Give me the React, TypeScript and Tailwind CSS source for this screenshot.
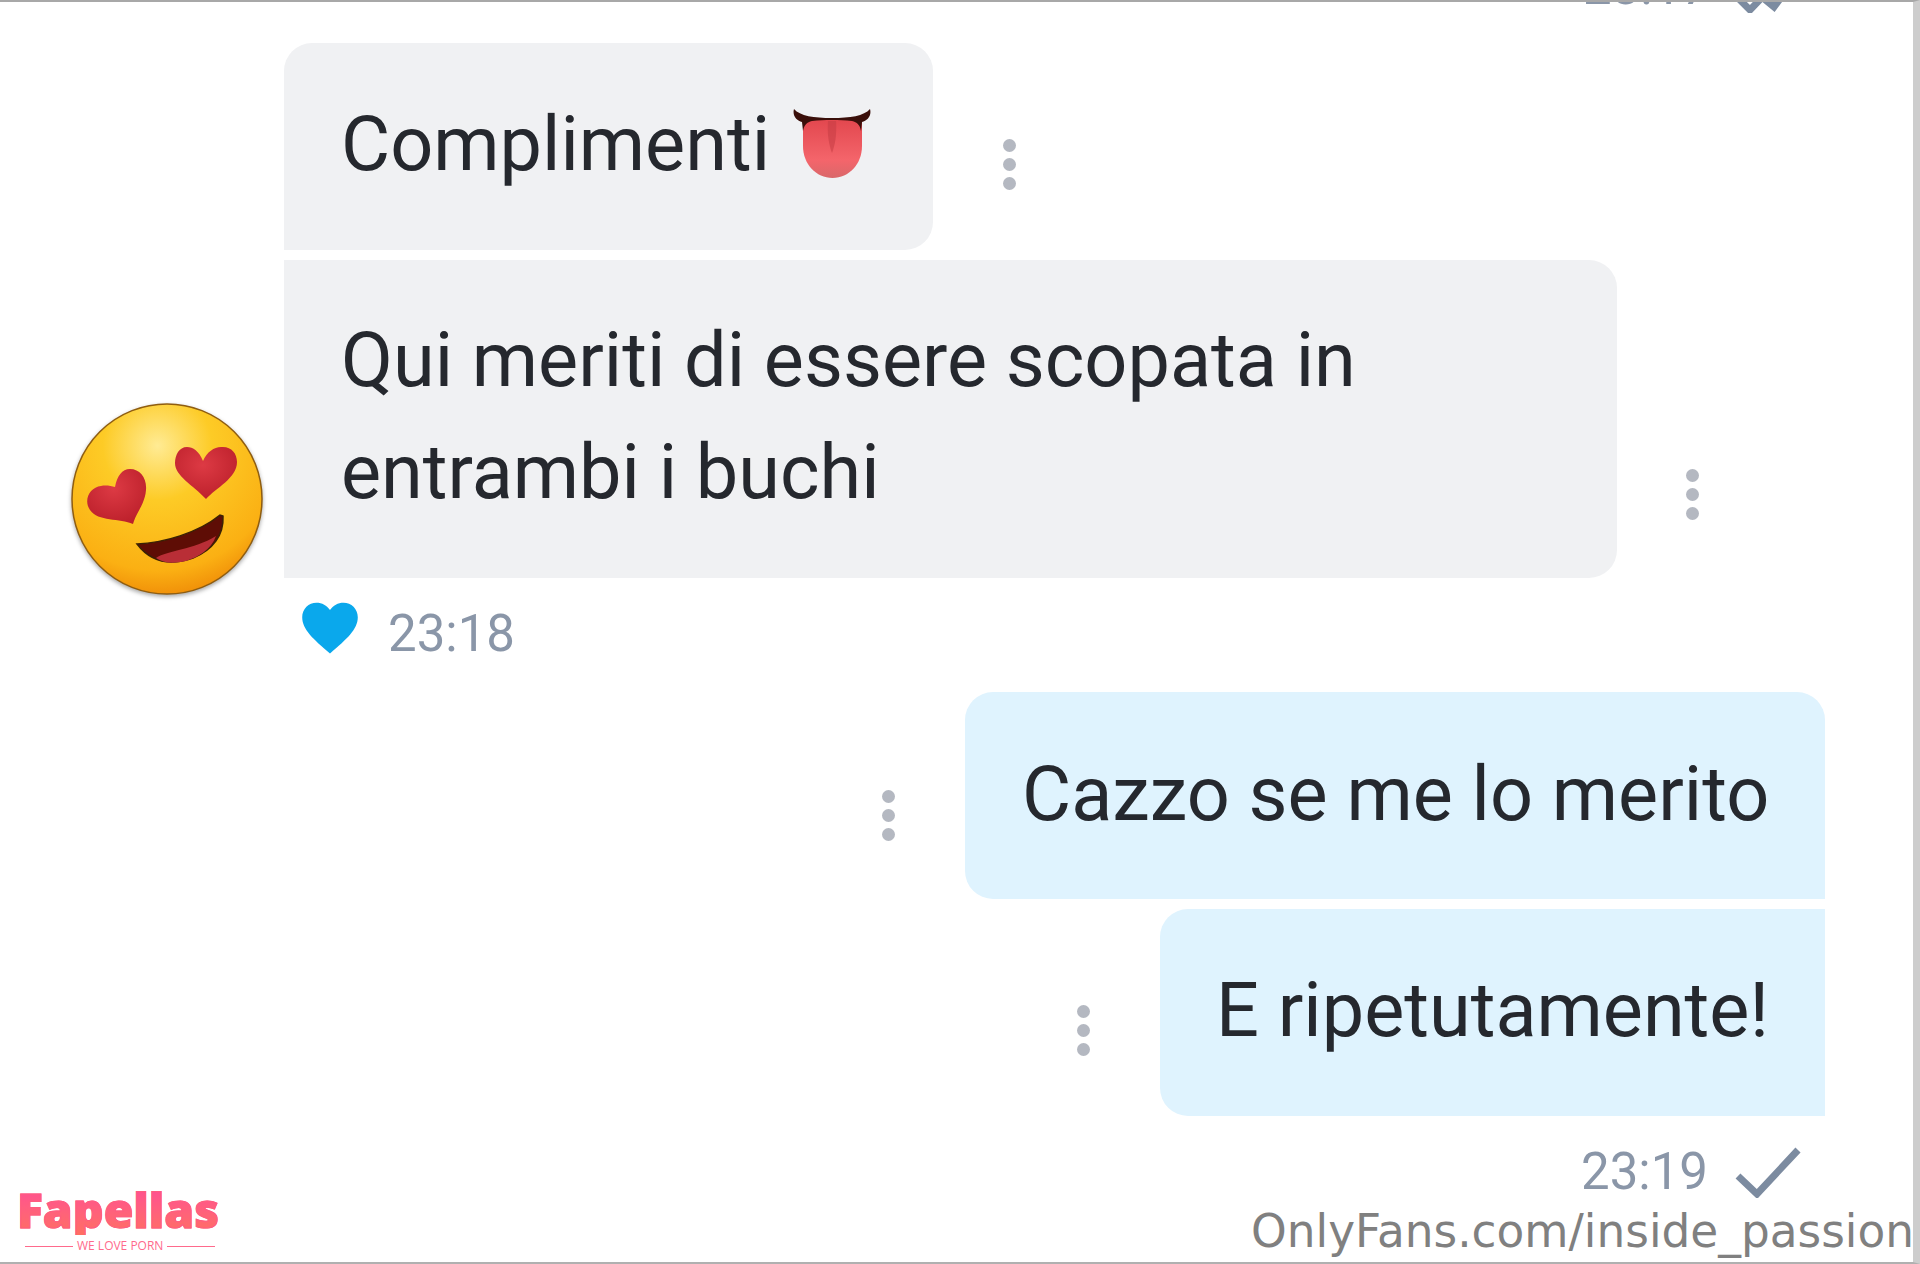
const font = "font-['Roboto',sans-serif]";

const Dots = () => (
	<div className="flex flex-col gap-[6px]">
		<span className="w-[13px] h-[13px] rounded-full bg-[#b4b8c1]" />
		<span className="w-[13px] h-[13px] rounded-full bg-[#b4b8c1]" />
		<span className="w-[13px] h-[13px] rounded-full bg-[#b4b8c1]" />
	</div>
);

const HeartEyes = () => (
	<svg width="198" height="198" viewBox="0 0 198 198" aria-hidden="true" className="drop-shadow-[0_2px_2px_rgba(0,0,0,0.35)]">
		<defs>
			<radialGradient id="face" cx="45%" cy="22%" r="82%">
				<stop offset="0" stopColor="#ffeb94" />
				<stop offset="0.35" stopColor="#fdcb26" />
				<stop offset="0.8" stopColor="#fbb013" />
				<stop offset="1" stopColor="#ee8806" />
			</radialGradient>
			<radialGradient id="love" cx="45%" cy="35%" r="70%">
				<stop offset="0" stopColor="#dd3a44" />
				<stop offset="1" stopColor="#bb1f2a" />
			</radialGradient>
		</defs>
		<circle cx="99" cy="99" r="95" fill="url(#face)" stroke="#8f5d10" strokeWidth="1.5" />
		<path
			d="M135 61C131 51 125 47 119 47 111 47 107 55 107 63 107 76 125 85 138 99 148 88 169 78 169 62 169 53 163 46 153 47 146 47 139 52 135 61Z"
			fill="url(#love)"
		/>
		<path
			d="M47 87C49 76 54 69 62 69 72 69 79 78 78 90 77 104 68 113 65 124 52 118 30 122 22 110 15 100 22 87 33 86 38 85 43 86 47 87Z"
			fill="url(#love)"
		/>
		<path d="M69 144C95 143 130 133 152 115L155 116C156 135 145 150 125 158 105 165 85 165 69 144Z" fill="#5e0d05" stroke="#3a2204" strokeWidth="1.5" />
		<path d="M88 158C100 150 125 150 148 136 143 150 130 157 118 161 105 164 95 163 88 158Z" fill="#b92e36" />
	</svg>
);

const Tongue = () => (
	<svg width="78" height="70" viewBox="0 0 78 70" aria-hidden="true" className="shrink-0">
		<defs>
			<linearGradient id="tongue" x1="0" y1="0" x2="0" y2="1">
				<stop offset="0" stopColor="#e2474e" />
				<stop offset="0.7" stopColor="#f4656b" />
				<stop offset="1" stopColor="#d9686a" />
			</linearGradient>
		</defs>
		<path d="M10 10h59v27c0 18-13 32-29.500 32S10 55 10 37z" fill="url(#tongue)" />
		<path d="M35 12c-1 14 1 24 4 32 3-8 5-18 4-32z" fill="#c43c43" opacity="0.55" />
		<path
			d="M1 0c6 7 20 9 38 9S71 7 77 0c2 7-3 12-8 13l-1 9c-1-6-4-9-9-10-6-1-13-1-20-1s-14 0-20 1c-5 1-8 4-9 10l-1-9C4 12-1 7 1 0z"
			fill="#3a0f0a"
		/>
	</svg>
);

const BlueHeart = () => (
	<svg width="58" height="54" viewBox="0 0 24 22" aria-hidden="true" className="mt-[3px]">
		<path
			d="M12 21.500C5 15.500.5 11.500.5 6.500.5 3 3.200.5 6.400.5c2.300 0 4.300 1.100 5.600 3.100C13.300 1.600 15.300.5 17.600.5c3.200 0 5.900 2.500 5.900 6 0 5-4.500 9-11.500 15z"
			fill="#0aa8ec"
		/>
	</svg>
);

const App = () => {
	return (
		<div className={`${font} w-[1920px] h-[1264px] bg-white overflow-hidden relative border-t-2 border-b-2 border-r-[7px] border-t-[#a8a8a8] border-b-[#b0b0b0] border-r-[#cdcdcd] text-[#25282e] text-[75.6px] leading-[112px]`}>
			{/* bottom of the previous message, cut off by the top edge */}
			<div className="h-[41px] overflow-hidden flex items-start pl-[1583px] gap-[21px] text-[51px] leading-[60px] text-[#8a96a8]">
				<span className="-mt-[45px]">23:17</span>
				<svg width="70" height="60" viewBox="0 0 70 60" fill="none" aria-hidden="true" className="-mt-[49px] shrink-0">
					<path d="M2 40l17 17L60 14" stroke="#7c8ba0" strokeWidth="7" />
					<path d="M26 40l17 14L68 20" stroke="#7c8ba0" strokeWidth="7" />
				</svg>
			</div>
			<div className="flex flex-col pl-[68px]">
				{/* first incoming */}
				<div className="flex items-center pl-[216px]">
					<div className="w-[649px] h-[207px] bg-[#f0f1f3] rounded-[28px] rounded-bl-none pl-[57px] pb-[5px] flex items-center gap-[23px]">
						<span>Complimenti</span>
						<Tongue />
					</div>
					<div className="ml-[70px] mt-[36px]">
						<Dots />
					</div>
				</div>
				{/* second incoming */}
				<div className="flex items-end mt-[10px]">
					<div className="w-[216px] mb-[-20px]">
						<HeartEyes />
					</div>
					<div className="w-[1333px] h-[318px] bg-[#f0f1f3] rounded-[28px] rounded-tl-none rounded-bl-none pl-[57px] pt-[44px]">
						<p>Qui meriti di essere scopata in</p>
						<p>entrambi i buchi</p>
					</div>
					<div className="ml-[69px] mb-[58px]">
						<Dots />
					</div>
				</div>
				<div className="flex items-start pl-[233px] mt-[20px] gap-[29px] text-[51px] leading-[60px] text-[#8a96a8]">
					<BlueHeart />
					<span className="mt-[6px]">23:18</span>
				</div>
			</div>
			<div className="flex flex-col items-end pr-[88px] mt-[28px]">
				<div className="flex items-center">
					<div className="mr-[70px] mt-[40px]">
						<Dots />
					</div>
					<div className="h-[207px] w-[860px] bg-[#dff3fe] rounded-[28px] rounded-br-none flex items-center pl-[57px] pb-[4px]">
						Cazzo se me lo merito
					</div>
				</div>
				<div className="flex items-center mt-[10px]">
					<div className="mr-[70px] mt-[36px]">
						<Dots />
					</div>
					<div className="h-[207px] w-[665px] bg-[#dff3fe] rounded-[28px] rounded-tr-none rounded-br-none flex items-center pl-[56px] pb-[5px]">
						E ripetutamente!
					</div>
				</div>
				<div className="flex items-center gap-[27px] mt-[26px] pr-[24px] text-[51px] leading-[60px] text-[#8a96a8]">
					<span>23:19</span>
					<svg width="66" height="52" viewBox="0 0 66 52" fill="none" aria-hidden="true">
						<path d="M3 30l19 18L63 4" stroke="#7c8ba0" strokeWidth="7" />
					</svg>
				</div>
			</div>
			{/* watermarks */}
			<div className="absolute left-[17px] bottom-[8px] w-[212px] flex flex-col items-start">
				<span className="font-['Noto_Sans',sans-serif] font-black text-[48px] leading-[50px] h-[50px] mb-[3px] overflow-hidden text-transparent bg-clip-text bg-gradient-to-b from-[#ff4d94] to-[#ff6f61] [-webkit-text-stroke:1px_#ff5c80]">Fapellas</span>
				<div className="flex items-center gap-[4px] pl-[8px] text-[#ff6a8c] text-[12px] leading-[16px] font-['Open_Sans',sans-serif]">
					<span className="w-[48px] h-px bg-[#ff6a8c]" />
					<span>WE LOVE PORN</span>
					<span className="w-[48px] h-px bg-[#ff6a8c]" />
				</div>
			</div>
			<div className="absolute -right-px bottom-[2px] font-['DejaVu_Sans',sans-serif] text-[45.4px] leading-[56px] text-[#808080]">OnlyFans.com/inside_passion</div>
		</div>
	);
};

export default App;
